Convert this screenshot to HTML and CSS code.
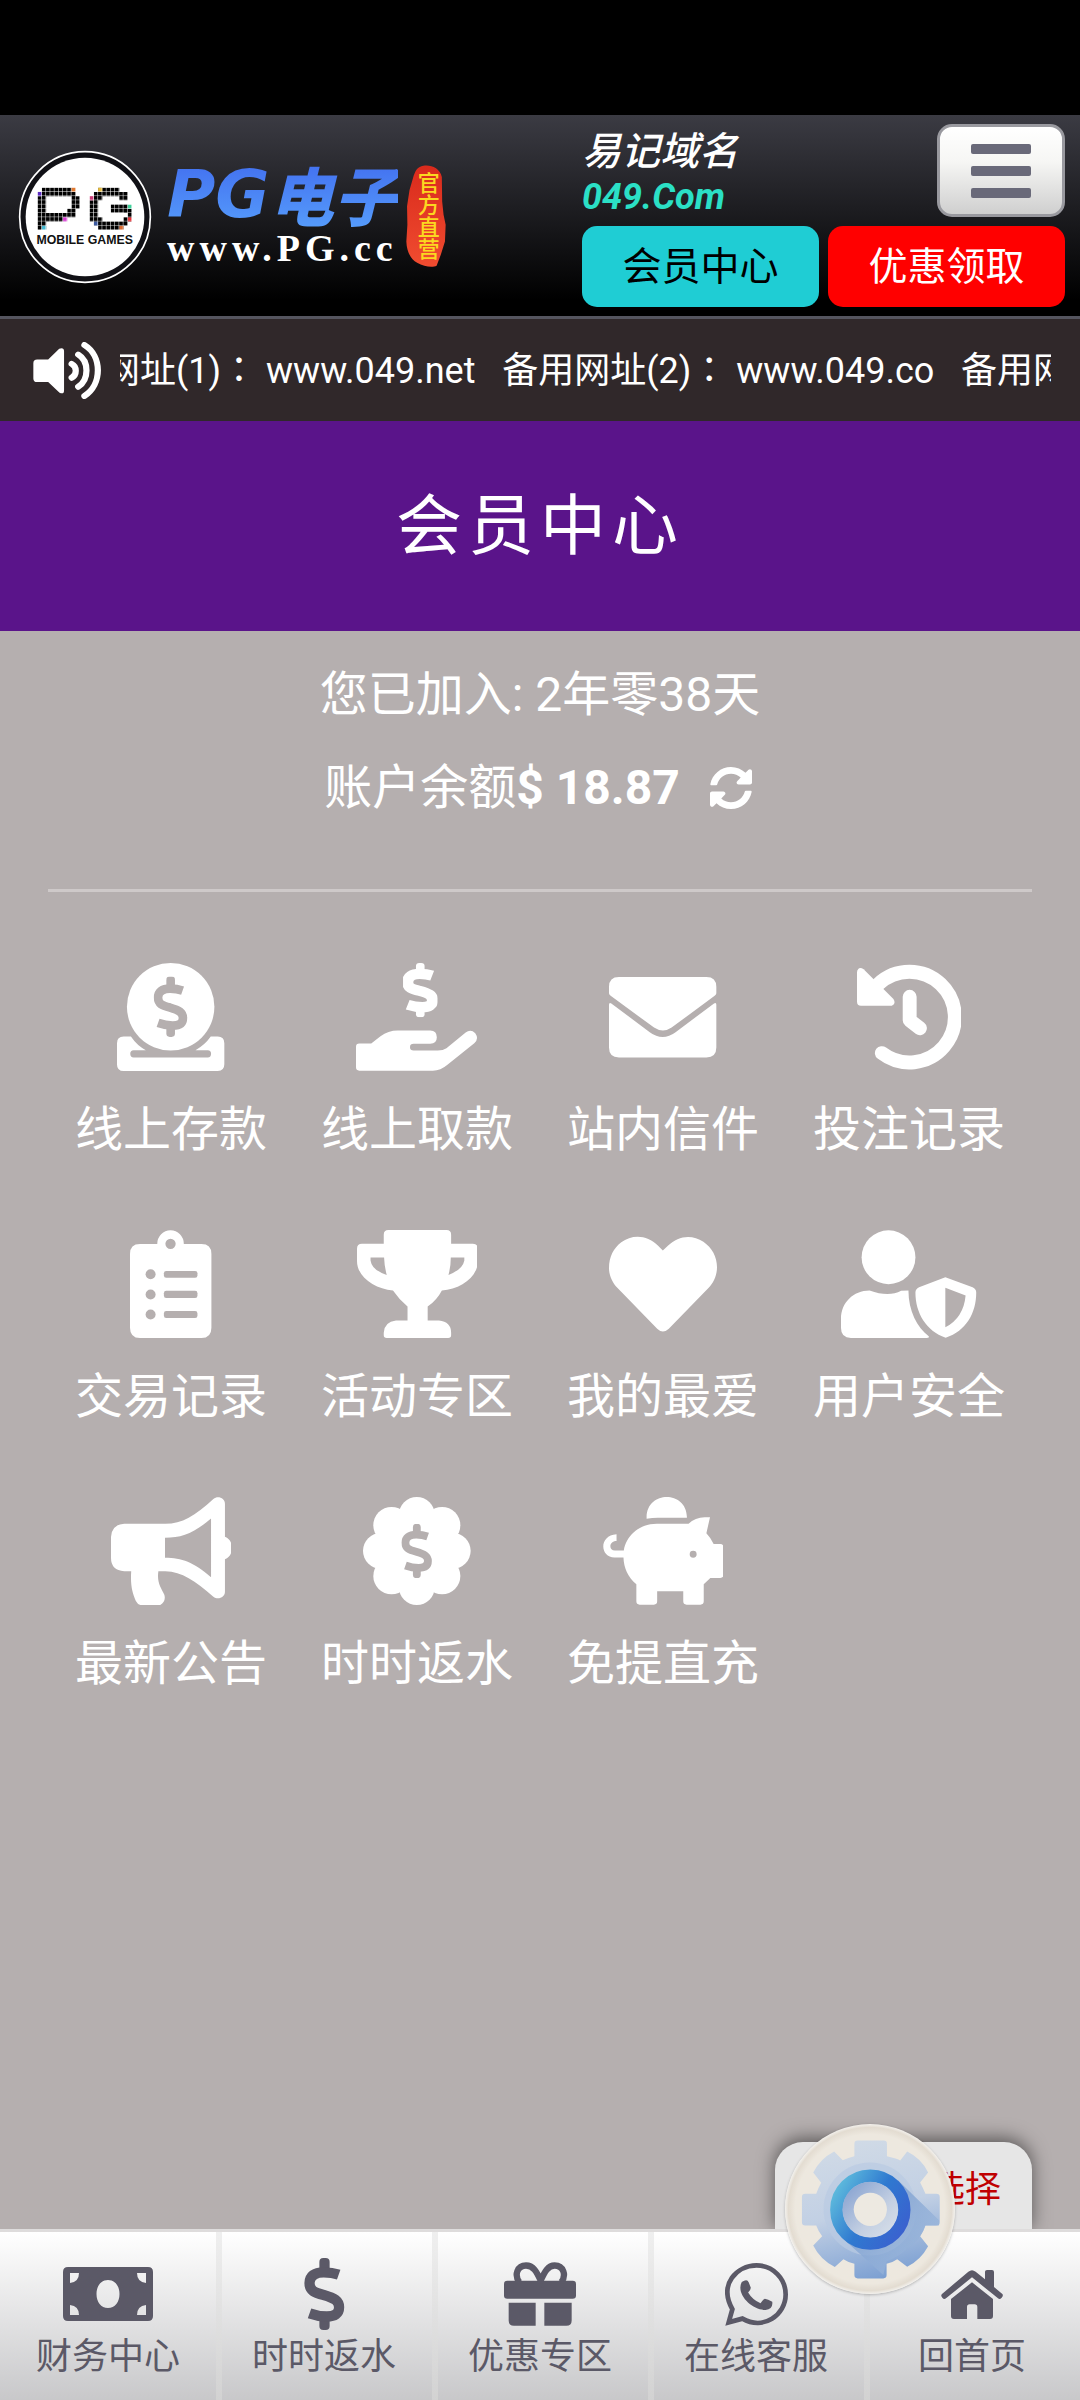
FILE: index.html
```html
<!DOCTYPE html>
<html lang="zh-CN">
<head>
<meta charset="utf-8">
<meta name="viewport" content="width=device-width, initial-scale=1">
<title>会员中心</title>
<link rel="stylesheet" href="styles.css">
</head>
<body>
<svg class="defs" width="0" height="0" aria-hidden="true">
  <symbol id="dollar" viewBox="0 0 104 181" preserveAspectRatio="none">
    <rect x="39" y="0" width="26" height="40" rx="10" fill="currentColor"/>
    <rect x="39" y="141" width="26" height="40" rx="10" fill="currentColor"/>
    <path class="dollar-s" d="M88 42C74 37 62 36 50 36C26 36 14 46 14 63C14 82 26 87 50 93C78 101 89 108 89 124C89 140 78 147 58 147C42 147 28 144 14 139" fill="none" stroke="currentColor"/>
  </symbol>
</svg>

<div class="statusbar"></div>

<header class="header">
  <a class="logo" href="#">
    <svg class="logo-badge" viewBox="0 0 420 420" aria-hidden="true">
      <defs>
        <pattern id="cells" x="68" y="125" width="12.7" height="12.7" patternUnits="userSpaceOnUse"><path d="M12.7 0V12.7H0" fill="none" stroke="#fff" stroke-width="3"/></pattern>
        <pattern id="cells2" x="224" y="125" width="12.7" height="12.7" patternUnits="userSpaceOnUse"><path d="M12.7 0V12.7H0" fill="none" stroke="#fff" stroke-width="3"/></pattern>
      </defs>
      <circle cx="210" cy="213" r="196" fill="#111116" stroke="#fff" stroke-width="5"/>
      <circle cx="210" cy="213" r="178" fill="#fff"/>
      <g fill="#000" transform="translate(68 125) scale(12.7)">
        <path d="M1 0H8V2H1ZM0 2H2V10H0ZM8 1H9V2H8ZM8 2H10V5H8ZM7 5H9V7H7ZM2 6H7V7H2ZM2 7H6V8H2Z"/>
        <path d="M8 0h1v1H8z" fill="#e0782f"/><path d="M0 1h1v1H0z" fill="#5b2bc0"/><path d="M6 7h1v1H6z" fill="#d53bd0"/><path d="M1 9h1v1H1z" fill="#45b8d0"/>
      </g>
      <g fill="#000" transform="translate(224 125) scale(12.7)">
        <path d="M2 0H7V1H9V3H7V2H3V3H2V7H3V8H9V9H8V10H2V9H1V8H0V3H1V1H2ZM5 4H9V5H10V8H8V7H9V6H8V5.900H5Z" fill-rule="nonzero"/>
        <path d="M2 0h1v1H2z" fill="#e5bb3c"/><path d="M0 2h1v1H0z" fill="#cc3e78"/><path d="M9 4h1v1H9z" fill="#3fd09a"/><path d="M9 7h1v1H9z" fill="#e63238"/><path d="M1 8h1v1H1z" fill="#3c5aa0"/><path d="M7 9h1v1H7z" fill="#d96a30"/>
      </g>
      <path d="M66 123h132v131H66z" fill="url(#cells)"/>
      <path d="M222 123h132v131H222z" fill="url(#cells2)"/>
      <text x="209" y="295" text-anchor="middle" class="badge-text">MOBILE GAMES</text>
    </svg>
    <span class="logo-words">
      <span class="logo-name">PG<span class="logo-cjk">电子</span></span>
      <span class="logo-url">www.PG.cc</span>
    </span>
    <span class="seal">
      <svg class="seal-bg" viewBox="0 0 115 307" preserveAspectRatio="none" aria-hidden="true"><defs><linearGradient id="sealg" x2="0" y2="1"><stop stop-color="#d92a1c"/><stop offset="1" stop-color="#f04c30"/></linearGradient></defs><path fill="url(#sealg)" d="M50 2C70-2 98 8 103 36L104 110L108 150L114 180L112 230L100 270L88 303C76 309 52 306 32 294C14 284 2 262 1 230L4 180L3 124L10 76L20 40C26 16 34 4 50 2Z"/></svg>
      <span class="seal-text">官方直营</span>
    </span>
  </a>
  <div class="header-side">
    <div class="domain">
      <span class="domain-label">易记域名</span>
      <span class="domain-url">049.Com</span>
    </div>
    <button class="menu-btn" type="button" aria-label="菜单"><span class="bar"></span><span class="bar"></span><span class="bar"></span></button>
    <a class="pill pill-member" href="#">会员中心</a>
    <a class="pill pill-promo" href="#">优惠领取</a>
  </div>
</header>

<div class="notice">
  <svg class="speaker" viewBox="96 722 200 172" preserveAspectRatio="none" aria-hidden="true">
    <path fill="#fff" d="M108 775H140L172 742Q186 737 186 750V868Q186 881 173 875L140 843H108Q97 843 97 832V786Q97 775 108 775Z"/>
    <path fill="none" stroke="#fff" stroke-width="18" stroke-linecap="round" d="M208 788C224 796 224 822 208 830M227 760C259 780 259 836 227 857M245 731C297 764 297 850 245 885"/>
  </svg>
  <div class="ticker">网址(1)<span class="colon" lang="zh-TW">：</span> www.049.net   备用网址(2)<span class="colon" lang="zh-TW">：</span> www.049.co   备用网址(3)</div>
</div>

<h1 class="title">会员中心</h1>

<main class="main">
  <section class="summary">
    <p class="line">您已加入: 2年零38天</p>
    <p class="line">账户余额<b>$ 18.87</b><button class="refresh" type="button" aria-label="刷新"><svg viewBox="8 8 496 496" aria-hidden="true"><path fill="#fff" d="M370.72 133.28C339.458 104.008 298.888 87.962 255.848 88c-77.458.068-144.328 53.178-162.791 126.85-1.344 5.363-6.122 9.15-11.651 9.15H24.103c-7.498 0-13.194-6.807-11.807-14.176C33.933 94.924 134.813 8 256 8c66.448 0 126.791 26.136 171.315 68.685L463.03 40.97C478.149 25.851 504 36.559 504 57.941V192c0 13.255-10.745 24-24 24H345.941c-21.382 0-32.09-25.851-16.971-40.971l41.75-41.749zM32 296h134.059c21.382 0 32.09 25.851 16.971 40.971l-41.75 41.75c31.262 29.273 71.835 45.319 114.876 45.28 77.418-.07 144.315-53.144 162.787-126.849 1.344-5.363 6.122-9.15 11.651-9.15h57.304c7.498 0 13.194 6.807 11.807 14.176C478.067 417.076 377.187 504 256 504c-66.448 0-126.791-26.136-171.315-68.685L48.97 471.03C33.851 486.149 8 475.441 8 454.059V320c0-13.255 10.745-24 24-24z"/></svg></button></p>
  </section>
  <hr class="rule">
  <nav class="grid" aria-label="会员功能">
    <a class="tile" href="#">
      <svg class="icon" viewBox="231 99 324 326" aria-hidden="true"><circle cx="393" cy="231" r="132"/><path fill-rule="evenodd" d="M251 321H273Q292 349 318 362H281Q271 362 271 373T281 384H505Q515 384 515 373T505 362H468Q496 347 514 321H535Q555 321 555 341V405Q555 425 535 425H251Q231 425 231 405V341Q231 321 251 321Z"/><use href="#dollar" class="cut" x="341" y="140" width="104" height="182"/></svg>
      <span>线上存款</span>
    </a>
    <a class="tile" href="#">
      <svg class="icon" viewBox="948 99 366 326" aria-hidden="true"><use href="#dollar" class="heavy" x="1090" y="99" width="104" height="164"/><path d="M958 342H994L1022 320Q1045 303 1074 303H1172Q1192 304 1192 323T1172 343H1122Q1111 343 1111 353T1122 363H1195Q1211 363 1221 356L1279 309Q1294 297 1308 311Q1320 328 1305 341L1224 406Q1203 424 1180 424H958Q948 424 948 414V352Q948 342 958 342Z"/></svg>
      <span>线上取款</span>
    </a>
    <a class="tile" href="#">
      <svg class="icon" viewBox="207 99 324 326" aria-hidden="true"><path d="M237 141H501Q531 141 531 171V190Q531 194 526 198L396 294Q370 312 343 294L212 198Q207 194 207 190V171Q207 141 237 141ZM214 221L330 308Q369 337 408 308L524 221Q531 217 531 225V354Q531 384 501 384H237Q207 384 207 354V225Q207 217 214 221Z"/></svg>
      <span>站内信件</span>
    </a>
    <a class="tile" href="#">
      <svg class="icon" viewBox="948 99 316 326" aria-hidden="true"><path fill="none" stroke="#fff" stroke-width="42" stroke-linecap="round" d="M1023 371A137 137 0 1 0 1012 163"/><path d="M968 118L1058 208Q1067 222 1053 228H960Q948 228 948 216V126Q952 108 968 118Z"/><path fill="none" stroke="#fff" stroke-width="42" stroke-linecap="round" stroke-linejoin="round" d="M1107 201V272L1138 296"/></svg>
      <span>投注记录</span>
    </a>
    <a class="tile" href="#">
      <svg class="icon" viewBox="271 900 245 325" aria-hidden="true"><path fill-rule="evenodd" d="M301 942H353A40 41 0 0 1 433 942H486Q516 942 516 972V1194Q516 1225 486 1225H301Q271 1225 271 1194V972Q271 942 301 942ZM393 926A15 15 0 1 0 393 957A15 15 0 1 0 393 926Z"/><g class="cut"><circle cx="333" cy="1033" r="15"/><circle cx="333" cy="1094" r="15"/><circle cx="333" cy="1154" r="15"/><rect x="373" y="1023" width="101" height="21" rx="7"/><rect x="373" y="1083" width="101" height="22" rx="7"/><rect x="373" y="1144" width="101" height="21" rx="7"/></g></svg>
      <span>交易记录</span>
    </a>
    <a class="tile" href="#">
      <svg class="icon" viewBox="948 900 366 327" aria-hidden="true"><path fill-rule="evenodd" d="M1043 900H1219Q1233 900 1233 914V942H1299Q1314 942 1314 957V994C1314 1043 1260 1080 1205 1083Q1190 1112 1162 1132V1174H1196Q1233 1178 1233 1211V1219Q1233 1227 1224 1227H1038Q1029 1227 1029 1219V1211Q1031 1178 1066 1174H1101V1132Q1077 1112 1057 1083C1002 1078 948 1043 948 994V957Q948 942 963 942H1029V914Q1029 900 1043 900ZM989 983V992Q993 1021 1038 1036Q1031 1010 1030 983ZM1232 983Q1232 1010 1225 1036Q1268 1019 1273 992V983Z"/></svg>
      <span>活动专区</span>
    </a>
    <a class="tile" href="#">
      <svg class="icon" viewBox="207 900 325 325" aria-hidden="true"><path d="M369 962L354 947C323 914 276 912 244 937C221 955 207 980 207 1015C207 1036 217 1058 232 1074L352 1197Q369 1214 387 1197L507 1074C522 1058 532 1036 532 1012C532 980 517 953 491 935C458 913 415 916 385 947Z"/></svg>
      <span>我的最爱</span>
    </a>
    <a class="tile" href="#">
      <svg class="icon" viewBox="904 901 407 325" aria-hidden="true"><circle cx="1047" cy="983" r="81"/><path fill-rule="evenodd" d="M990 1083Q1047 1104 1085 1084L1107 1083C1107 1145 1133 1193 1168 1221Q1171 1226 1162 1226H934Q904 1226 904 1196V1168C904 1120 941 1083 990 1083ZM1218 1043L1300 1073Q1311 1078 1311 1089C1311 1150 1281 1205 1219 1225C1160 1205 1128 1150 1128 1089Q1128 1078 1139 1073ZM1218 1075V1194Q1273 1165 1279 1098Z"/></svg>
      <span>用户安全</span>
    </a>
    <a class="tile" href="#">
      <svg class="icon" viewBox="91 111 365 326" aria-hidden="true"><path fill-rule="evenodd" d="M131 192H255C306 192 344 168 400 117C414 105 435 115 435 131V231Q456 240 456 265T435 299V397C435 414 414 423 400 412C344 363 306 337 255 335H234C229 370 242 385 252 406Q258 427 238 438H185Q172 437 166 425C156 400 149 380 152 335H131Q91 332 91 295V232Q93 194 131 192ZM254 234V294C305 294 340 307 393 353V176C340 221 305 234 254 234Z"/></svg>
      <span>最新公告</span>
    </a>
    <a class="tile" href="#">
      <svg class="icon" viewBox="849 113 324 325" aria-hidden="true"><circle cx="1011" cy="275" r="125"/><circle cx="1011" cy="167" r="54"/><circle cx="1011" cy="384" r="54"/><circle cx="903" cy="275" r="54"/><circle cx="1119" cy="275" r="54"/><circle cx="935" cy="198" r="55"/><circle cx="1087" cy="198" r="55"/><circle cx="935" cy="351" r="55"/><circle cx="1087" cy="351" r="55"/><use href="#dollar" class="cut" x="964" y="194" width="94" height="163"/></svg>
      <span>时时返水</span>
    </a>
    <a class="tile" href="#">
      <svg class="icon" viewBox="127 111 365 327" aria-hidden="true"><path d="M259 177V171C261 91 379 91 381 171V174H293Q276 174 259 177Z"/><path fill-rule="evenodd" d="M290 192H386Q406 172 435 172H451L440 221Q454 236 462 253H482Q492 253 492 264V346Q492 356 482 356H452L432 375V427Q432 437 422 437H380Q370 437 370 427V396H291V427Q291 437 281 437H238Q228 437 228 427V375C202 353 190 325 189 294H162C117 294 114 227 168 224V244C144 244 144 273 163 273H190C198 225 240 192 290 192ZM400 274A10 10 0 1 0 400 295A10 10 0 1 0 400 274Z"/></svg>
      <span>免提直充</span>
    </a>
  </nav>
</main>

<footer class="footer">
  <a class="choose-tab" href="#">选择</a>
  <nav class="tabs" aria-label="底部导航">
    <a class="tab" href="#"><span class="tab-icon"><svg width="90" height="54" viewBox="0 0 90 54" aria-hidden="true"><path fill-rule="evenodd" d="M5 0H85Q90 0 90 5V49Q90 54 85 54H5Q0 54 0 49V5Q0 0 5 0ZM45 13C38 13 33.500 19 33.500 27S38 41 45 41S56.500 35 56.500 27S52 13 45 13ZM7 6V16Q16 15 16 6ZM74 6Q74 15 83 16V6ZM7 38V48H16Q16 39 7 38ZM83 38Q74 39 74 48H83Z"/></svg></span>财务中心</a>
    <a class="tab" href="#"><span class="tab-icon"><svg width="41" height="72" aria-hidden="true"><use href="#dollar" width="41" height="72"/></svg></span>时时返水</a>
    <a class="tab" href="#"><span class="tab-icon"><svg width="72" height="64" viewBox="72 67 216 191" aria-hidden="true"><path d="M82 123H278Q288 123 288 133V167Q288 177 278 177H82Q72 177 72 167V133Q72 123 82 123ZM86 189H167V258H102Q86 258 86 242ZM193 189H275V242Q275 258 259 258H193Z"/><path fill="none" stroke="#5b5967" stroke-width="19" d="M118 127C102 106 112 77 138 77C160 77 170 96 182 122C194 96 204 77 224 77C250 77 260 106 244 127"/></svg></span>优惠专区</a>
    <a class="tab" href="#"><span class="tab-icon"><svg width="63" height="63" viewBox="734 67 188 188" aria-hidden="true"><path fill="none" stroke="#5b5967" stroke-width="14" d="M745 244L756 205C714 129 770 75 828 74C878 74 915 114 915 161C915 222 849 269 786 233Z"/><path d="M784 124Q800 113 805 125L811 141Q811 147 803 155Q816 177 840 187Q848 176 853 174Q862 175 875 183Q878 204 855 207C815 208 765 160 784 124Z"/></svg></span>在线客服</a>
    <a class="tab" href="#"><span class="tab-icon"><svg width="62" height="49" viewBox="603 582 186 147" aria-hidden="true"><path d="M685 587Q696 578 707 587L735 610V587Q735 582 741 582H756Q762 582 762 588V633L787 654Q791 658 785 665Q779 672 774 667L696 604L618 667Q612 672 607 665Q601 658 606 654ZM696 619L759 669V720Q759 729 750 729H712V693Q712 685 704 685H689Q681 685 681 693V729H642Q633 729 633 720V669Z"/></svg></span>回首页</a>
  </nav>
  <button class="gear" type="button" aria-label="设置">
    <svg viewBox="134 132 512 512" aria-hidden="true">
      <defs>
        <linearGradient id="g1" gradientUnits="userSpaceOnUse" x1="340" y1="182" x2="440" y2="597"><stop stop-color="#d0dae6"/><stop offset=".5" stop-color="#c2d0e4"/><stop offset="1" stop-color="#7b9fd2"/></linearGradient>
        <linearGradient id="g2" x1="0" y1=".2" x2="1" y2=".8"><stop stop-color="#5cb8dc"/><stop offset=".5" stop-color="#2f79d0"/><stop offset="1" stop-color="#3a62cf"/></linearGradient>
        <linearGradient id="g3" x1="0" y1="0" x2="1" y2="1"><stop stop-color="#7f9cce"/><stop offset=".6" stop-color="#c3cfe2"/><stop offset="1" stop-color="#dbe2ea"/></linearGradient>
        <radialGradient id="g4"><stop offset=".88" stop-color="#ede8df"/><stop offset=".96" stop-color="#e3dcd1"/><stop offset="1" stop-color="#f3f1ed"/></radialGradient>
        <linearGradient id="g5" x1="0" y1="0" x2="1" y2="1"><stop stop-color="#6f94cb"/><stop offset="1" stop-color="#a5bfdf" stop-opacity=".6"/></linearGradient>
      </defs>
      <circle cx="390" cy="388" r="256" fill="url(#g4)"/>
      <g fill="url(#g1)">
        <path d="M353 182H431Q441 182 441 192V229Q473 236 481 242L502 215Q545 236 565 278L541 308Q550 325 557 342H590Q600 342 600 352V428Q600 438 590 438H557Q551 456 541 470L565 500Q544 540 502 562L472 539Q458 549 440 553V587Q440 597 430 597H353Q343 597 343 587V553Q325 549 310 539L284 563Q240 540 219 498L246 470Q234 455 228 438H195Q185 438 185 428V352Q185 342 195 342H228Q234 325 243 309L219 278Q240 237 282 215L308 241Q325 234 343 229V192Q343 182 353 182Z"/>
      </g>
      <circle cx="390" cy="388" r="140" fill="#b9cbe3" opacity=".7"/>
      <path d="M475 302L598 422V438H557Q551 456 541 470Q530 490 508 502A163 163 0 0 1 440 545L430 587L310 478Z" fill="url(#g5)"/>
      <circle cx="391" cy="390" r="102" fill="none" stroke="url(#g2)" stroke-width="38"/>
      <circle cx="391" cy="390" r="84" fill="url(#g3)"/>
      <circle cx="391" cy="389" r="50" fill="#ede9e1"/>
    </svg>
  </button>
</footer>
</body>
</html>
```
FILE: styles.css
```css
* { box-sizing: border-box; }

body {
  margin: 0;
  min-height: 100vh;
  display: flex;
  flex-direction: column;
  background: #b5afaf;
  color: #fff;
  font-family: Roboto, "Noto Sans CJK SC", sans-serif;
  font-size: 48px;
}

a { color: inherit; text-decoration: none; }
svg { display: block; fill: currentColor; }
button { border: 0; padding: 0; background: none; cursor: pointer; }
.defs { position: absolute; }
.dollar-s { stroke-width: var(--dollar-stroke, 26); }
.heavy { --dollar-stroke: 34; }

.statusbar { height: 115px; background: #000; }

/* header */
.header {
  display: flex;
  justify-content: space-between;
  padding: 9px 15px;
  background: linear-gradient(#3b3b43, #000 92%);
  border-bottom: 3px solid #55555f;
}

.logo { display: flex; align-items: center; }
.logo-badge { width: 140px; height: 140px; }
.badge-text { font: bold 37px "Liberation Sans", sans-serif; fill: #111; }
.logo-words { display: flex; flex-direction: column; margin-left: 12px; }
.logo-name {
  display: flex;
  align-items: center;
  font: italic bold 66px/64px "DejaVu Sans", sans-serif;
  background: linear-gradient(#4371f0, #559bfb);
  background-clip: text;
  color: transparent;
}
.logo-cjk { font: italic 900 64px/60px "Noto Sans CJK SC", sans-serif; padding-bottom: 4px; }
.logo-url { font: bold 38px/42px "Liberation Serif", serif; letter-spacing: 5px; }
.seal { position: relative; display: flex; justify-content: center; align-items: center; width: 40px; height: 102px; margin-left: 8px; }
.seal-bg { position: absolute; inset: 0; width: 100%; height: 100%; }
.seal-text { position: relative; writing-mode: vertical-rl; font-size: 22px; line-height: 30px; font-weight: 500; color: #fbd820; }

.header-side {
  display: grid;
  grid-template-columns: 237px 237px;
  grid-template-rows: 93px 81px;
  gap: 9px;
}
.domain { display: flex; flex-direction: column; justify-content: center; padding-top: 4px; font-weight: bold; font-style: italic; }
.domain-label { font-size: 39px; line-height: 48px; font-weight: 500; }
.domain-url { font-size: 36px; line-height: 42px; color: #2be0c6; }
.menu-btn {
  justify-self: end;
  display: flex;
  flex-direction: column;
  align-items: center;
  justify-content: center;
  gap: 12px;
  width: 128px;
  border: 3px solid #99999f;
  border-radius: 15px;
  background: linear-gradient(#fff, #f6f6f4 40%, #cfcfcf);
}
.bar { width: 60px; height: 10px; border-radius: 2px; background: #696979; }
.pill { display: flex; align-items: center; justify-content: center; border-radius: 15px; font-size: 39px; line-height: 80px; }
.pill-member { background: #1fcdd4; color: #000; }
.pill-promo { background: #f00; }

/* scrolling notice */
.notice { display: flex; align-items: center; height: 102px; padding: 0 29px 0 33px; background: #30282a; }
.speaker { flex: none; width: 69px; height: 57px; margin-right: 18px; }
.ticker { flex: 1; min-width: 0; overflow: hidden; white-space: pre; text-indent: -16px; padding-bottom: 2px; font-size: 36px; line-height: 48px; }
.colon { font-family: "Noto Sans CJK TC", sans-serif; }

.title {
  margin: 0;
  padding-top: 1px;
  background: #5a148a;
  font-size: 66px;
  font-weight: normal;
  line-height: 209px;
  letter-spacing: 6px;
  text-align: center;
}

/* member summary */
.main { flex: 1; padding: 17px 48px 120px; }
.line { display: flex; align-items: center; justify-content: center; margin: 0; line-height: 93px; white-space: pre; }
.refresh { color: #fff; margin: 0 4px 0 30px; }
.refresh svg { width: 42px; height: 42px; }
.rule { margin: 55px 0 0; border: 0; height: 3px; background: #cec9c9; }

.grid { display: grid; grid-template-columns: repeat(4, 1fr); row-gap: 64px; padding-top: 71px; }
.tile { display: flex; flex-direction: column; align-items: center; gap: 23px; line-height: 72px; }
.icon { height: 108px; width: auto; }
.cut { color: #b5afaf; fill: #b5afaf; }

/* bottom bar */
.footer { position: relative; border-top: 3px solid #dedcdc; color: #5b5967; }
.choose-tab {
  position: absolute;
  right: 48px;
  bottom: 100%;
  width: 257px;
  height: 90px;
  padding-right: 31px;
  border-radius: 28px 28px 0 0;
  background: #e6e6e6;
  box-shadow: 0 -4px 18px rgba(0, 0, 0, .5);
  clip-path: inset(-40px -40px 3px -40px);
  color: #c00000;
  font-size: 36px;
  line-height: 96px;
  text-align: right;
}
.tabs { display: grid; grid-template-columns: repeat(5, 1fr); background: linear-gradient(#fff, #c8c8ca); }
.tab {
  display: flex;
  flex-direction: column;
  align-items: center;
  height: 168px;
  padding-top: 22px;
  font-size: 36px;
  line-height: 46px;
}
.tab + .tab { background: linear-gradient(#efefef, #d2d2d2) no-repeat left / 6px 100%; }
.tab-icon { display: flex; align-items: center; height: 80px; }
.gear {
  position: absolute;
  right: 125px;
  top: -108px;
  width: 170px;
  height: 170px;
  border-radius: 50%;
  box-shadow: 0 1px 3px rgba(0, 0, 0, .25);
}
```
